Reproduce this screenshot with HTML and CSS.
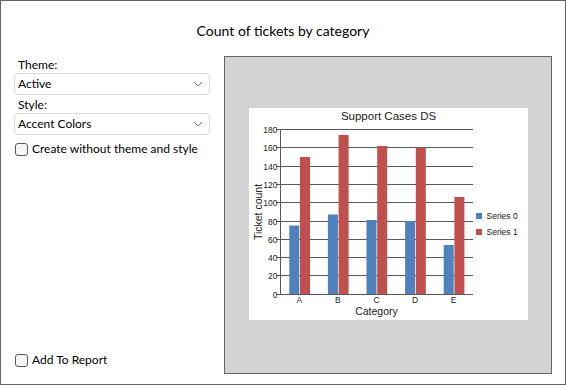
FILE: index.html
```html
<!DOCTYPE html>
<html>
<head>
<meta charset="utf-8">
<link rel="stylesheet" href="styles.css">
</head>
<body>
<div class="window">
  <div class="title">Count of tickets by category</div>
  <div class="main">
    <div class="left">
      <div class="label first">Theme:</div>
      <div class="combo"><span>Active</span>
        <svg class="chev" width="8" height="5" viewBox="0 0 8 5"><path d="M0.5 0.5 L4 4 L7.5 0.5" fill="none" stroke="#7a7a7a" stroke-width="1"/></svg>
      </div>
      <div class="label">Style:</div>
      <div class="combo"><span>Accent Colors</span>
        <svg class="chev" width="8" height="5" viewBox="0 0 8 5"><path d="M0.5 0.5 L4 4 L7.5 0.5" fill="none" stroke="#7a7a7a" stroke-width="1"/></svg>
      </div>
      <label class="check top"><span class="box"></span>Create without theme and style</label>
      <label class="check bottom"><span class="box"></span>Add To Report</label>
    </div>
    <div class="preview">
      <svg class="chart" width="279" height="212" viewBox="0 0 279 212">
        <rect x="0" y="0" width="279" height="212" fill="#fff"/>
        <text x="139.5" y="11.5" class="ctitle" text-anchor="middle">Support Cases DS</text>
        <g stroke="#5a5a5a" stroke-width="1">
          <line x1="27" x2="224" y1="21.5" y2="21.5"/>
          <line x1="27" x2="224" y1="39.5" y2="39.5"/>
          <line x1="27" x2="224" y1="58.5" y2="58.5"/>
          <line x1="27" x2="224" y1="76.5" y2="76.5"/>
          <line x1="27" x2="224" y1="94.5" y2="94.5"/>
          <line x1="27" x2="224" y1="113.5" y2="113.5"/>
          <line x1="27" x2="224" y1="131.5" y2="131.5"/>
          <line x1="27" x2="224" y1="149.5" y2="149.5"/>
          <line x1="27" x2="224" y1="167.5" y2="167.5"/>
          <line x1="27" x2="224" y1="186.5" y2="186.5"/>
          <line x1="31.5" x2="31.5" y1="21" y2="187"/>
        </g>
        <g class="ylab" text-anchor="end">
          <text x="28.5" y="24.5">180</text>
          <text x="28.5" y="42.5">160</text>
          <text x="28.5" y="61.5">140</text>
          <text x="28.5" y="79.5">120</text>
          <text x="28.5" y="97.5">100</text>
          <text x="28.5" y="116.5">80</text>
          <text x="28.5" y="134.5">60</text>
          <text x="28.5" y="152.5">40</text>
          <text x="28.5" y="170.5">20</text>
          <text x="28.5" y="189.5">0</text>
        </g>
        <g fill="#4f81bd">
          <rect x="40.3" y="117.5" width="10" height="68.8"/>
          <rect x="78.9" y="106.5" width="10" height="79.8"/>
          <rect x="117.5" y="112" width="10" height="74.3"/>
          <rect x="156.1" y="113" width="10" height="73.3"/>
          <rect x="194.7" y="137" width="10" height="49.3"/>
        </g>
        <g fill="#c0504d">
          <rect x="51" y="49" width="10" height="137.3"/>
          <rect x="89.6" y="27" width="10" height="159.3"/>
          <rect x="128.2" y="38" width="10" height="148.3"/>
          <rect x="166.8" y="39.7" width="10" height="146.6"/>
          <rect x="205.4" y="89" width="10" height="97.3"/>
        </g>
        <line x1="31" x2="224" y1="186.5" y2="186.5" stroke="#5a5a5a" stroke-width="1"/>
        <g class="xlab" text-anchor="middle">
          <text x="50.3" y="195">A</text>
          <text x="88.9" y="195">B</text>
          <text x="127.5" y="195">C</text>
          <text x="166.1" y="195">D</text>
          <text x="204.7" y="195">E</text>
        </g>
        <text x="127.5" y="206.5" class="axtitle" text-anchor="middle">Category</text>
        <text class="axtitle" text-anchor="middle" transform="translate(12.5 104) rotate(-90)">Ticket count</text>
        <rect x="227" y="105" width="6" height="6" fill="#4f81bd"/>
        <text x="237.5" y="110.5" class="leg">Series 0</text>
        <rect x="227" y="121" width="6" height="6" fill="#c0504d"/>
        <text x="237.5" y="126.5" class="leg">Series 1</text>
      </svg>
    </div>
  </div>
</div>
</body>
</html>
```
FILE: styles.css
```css
* { box-sizing: border-box; }
html, body { margin: 0; padding: 0; background: #fff; }
body {
  font-family: "Lato", "Noto Sans", sans-serif;
  font-size: 12px;
  color: #000;
}
.window {
  width: 566px;
  height: 385px;
  border: 1px solid #646464;
  display: flex;
  flex-direction: column;
  background: #fff;
}
.title {
  height: 55px;
  padding-top: 21px;
  text-align: center;
  font-size: 14px;
  line-height: 17px;
}
.main {
  flex: 1;
  display: flex;
  gap: 14px;
  padding: 0 13px 10px 13px;
}
.left {
  width: 196px;
  display: flex;
  flex-direction: column;
}
.label {
  height: 17px;
  line-height: 17px;
  padding-left: 4px;
}
.combo {
  height: 22px;
  border: 1px solid #d9d9d9;
  border-radius: 3px;
  display: flex;
  align-items: center;
  justify-content: space-between;
  padding: 0 7px 0 3px;
  line-height: 20px;
}
.combo + .label { height: 18px; line-height: 19px; }
.chev { display: block; }
.check {
  display: flex;
  align-items: center;
  gap: 4px;
  height: 16px;
  line-height: 16px;
  padding-left: 1px;
}
.check.top { margin-top: 6px; }
.check.bottom { margin-top: auto; margin-bottom: 6px; }
.box {
  width: 13px;
  height: 13px;
  border: 1px solid #5a5a5a;
  border-radius: 3px;
  background: #f6f6f6;
  flex: none;
}
.preview {
  width: 328px;
  background: #d3d3d3;
  border: 1px solid #646464;
  display: flex;
  align-items: center;
  justify-content: center;
  padding-bottom: 2px;
}
.chart { display: block; }
.chart text { font-family: "Liberation Sans", Arial, sans-serif; fill: #222; }
.ctitle { font-size: 11.5px; }
.ylab text, .xlab text, .leg { font-size: 8.5px; }
.axtitle { font-size: 10.5px; }
```
